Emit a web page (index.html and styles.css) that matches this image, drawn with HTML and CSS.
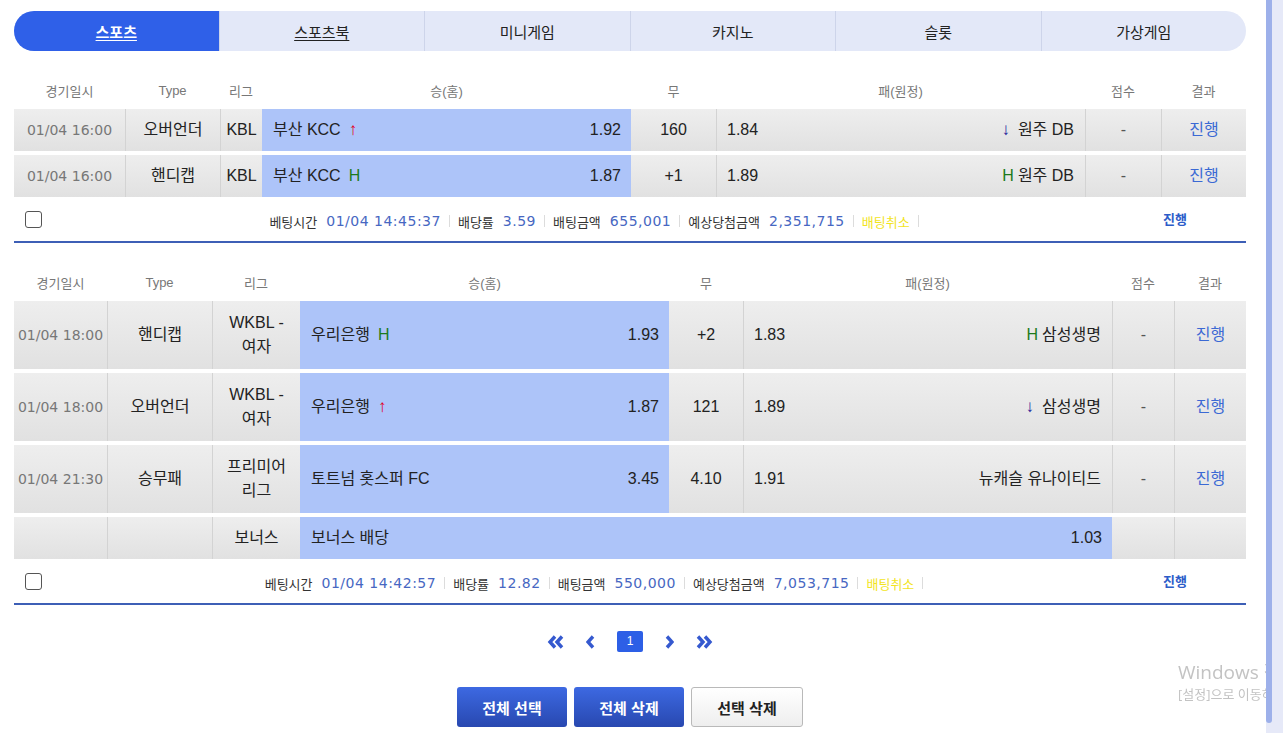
FILE: index.html
```html
<!DOCTYPE html>
<html lang="ko">
<head>
    <meta charset="UTF-8">
    <meta name="viewport" content="width=device-width, initial-scale=1.0">
    <title>베팅내역</title>
    <link rel="stylesheet" href="styles.css">
</head>
<body>
<div class="page">
    <ul class="tabs">
        <li class="tab active"><a href="#">스포츠</a></li>
        <li class="tab linked"><a href="#">스포츠북</a></li>
        <li class="tab"><a href="#">미니게임</a></li>
        <li class="tab"><a href="#">카지노</a></li>
        <li class="tab"><a href="#">슬롯</a></li>
        <li class="tab"><a href="#">가상게임</a></li>
    </ul>

    <!-- 베팅 1 -->
    <section class="bet">
        <table class="slip slip-a">
            <colgroup>
                <col><col><col><col><col><col><col><col>
            </colgroup>
            <thead>
            <tr>
                <th>경기일시</th><th>Type</th><th>리그</th><th>승(홈)</th><th>무</th><th>패(원정)</th><th>점수</th><th>결과</th>
            </tr>
            </thead>
            <tbody>
            <tr>
                <td class="date">01/04 16:00</td>
                <td>오버언더</td>
                <td>KBL</td>
                <td class="home"><div class="pick"><span>부산 KCC<i class="up">↑</i></span><span>1.92</span></div></td>
                <td class="draw">160</td>
                <td class="away"><div class="pick"><span>1.84</span><span><i class="down">↓</i>원주 DB</span></div></td>
                <td class="score">-</td>
                <td class="state">진행</td>
            </tr>
            <tr>
                <td class="date">01/04 16:00</td>
                <td>핸디캡</td>
                <td>KBL</td>
                <td class="home"><div class="pick"><span>부산 KCC<i class="hc">H</i></span><span>1.87</span></div></td>
                <td class="draw">+1</td>
                <td class="away"><div class="pick"><span>1.89</span><span><i class="hc hc-away">H</i>원주 DB</span></div></td>
                <td class="score">-</td>
                <td class="state">진행</td>
            </tr>
            </tbody>
        </table>
        <div class="foot">
            <div class="foot-check"><input type="checkbox"></div>
            <div class="foot-info">
                <span class="lbl">베팅시간</span><span class="val">01/04 14:45:37</span><i class="sep"></i>
                <span class="lbl">배당률</span><span class="val">3.59</span><i class="sep"></i>
                <span class="lbl">배팅금액</span><span class="val">655,001</span><i class="sep"></i>
                <span class="lbl">예상당첨금액</span><span class="val">2,351,715</span><i class="sep"></i>
                <span class="cancel">배팅취소</span><i class="sep"></i>
            </div>
            <div class="foot-state">진행</div>
        </div>
    </section>

    <!-- 베팅 2 -->
    <section class="bet">
        <table class="slip slip-b">
            <colgroup>
                <col><col><col><col><col><col><col><col>
            </colgroup>
            <thead>
            <tr>
                <th>경기일시</th><th>Type</th><th>리그</th><th>승(홈)</th><th>무</th><th>패(원정)</th><th>점수</th><th>결과</th>
            </tr>
            </thead>
            <tbody>
            <tr class="tall">
                <td class="date">01/04 18:00</td>
                <td>핸디캡</td>
                <td>WKBL - 여자</td>
                <td class="home"><div class="pick"><span>우리은행<i class="hc">H</i></span><span>1.93</span></div></td>
                <td class="draw">+2</td>
                <td class="away"><div class="pick"><span>1.83</span><span><i class="hc hc-away">H</i>삼성생명</span></div></td>
                <td class="score">-</td>
                <td class="state">진행</td>
            </tr>
            <tr class="tall">
                <td class="date">01/04 18:00</td>
                <td>오버언더</td>
                <td>WKBL - 여자</td>
                <td class="home"><div class="pick"><span>우리은행<i class="up">↑</i></span><span>1.87</span></div></td>
                <td class="draw">121</td>
                <td class="away"><div class="pick"><span>1.89</span><span><i class="down">↓</i>삼성생명</span></div></td>
                <td class="score">-</td>
                <td class="state">진행</td>
            </tr>
            <tr class="tall">
                <td class="date">01/04 21:30</td>
                <td>승무패</td>
                <td>프리미어 리그</td>
                <td class="home"><div class="pick"><span>토트넘 홋스퍼 FC</span><span>3.45</span></div></td>
                <td class="draw">4.10</td>
                <td class="away"><div class="pick"><span>1.91</span><span>뉴캐슬 유나이티드</span></div></td>
                <td class="score">-</td>
                <td class="state">진행</td>
            </tr>
            <tr>
                <td class="date"></td>
                <td></td>
                <td>보너스</td>
                <td class="home" colspan="3"><div class="pick"><span>보너스 배당</span><span>1.03</span></div></td>
                <td class="after-home"></td>
                <td></td>
            </tr>
            </tbody>
        </table>
        <div class="foot">
            <div class="foot-check"><input type="checkbox"></div>
            <div class="foot-info">
                <span class="lbl">베팅시간</span><span class="val">01/04 14:42:57</span><i class="sep"></i>
                <span class="lbl">배당률</span><span class="val">12.82</span><i class="sep"></i>
                <span class="lbl">배팅금액</span><span class="val">550,000</span><i class="sep"></i>
                <span class="lbl">예상당첨금액</span><span class="val">7,053,715</span><i class="sep"></i>
                <span class="cancel">배팅취소</span><i class="sep"></i>
            </div>
            <div class="foot-state">진행</div>
        </div>
    </section>

    <div class="pager">
        <a href="#" class="pg-arrow">
            <svg width="18" height="14" viewBox="0 0 18 14"><path d="M8 1.5L3 7l5 5.5M15 1.5L10 7l5 5.5" fill="none" stroke="#3559cf" stroke-width="3.4"/></svg>
        </a>
        <a href="#" class="pg-arrow">
            <svg width="10" height="14" viewBox="0 0 10 14"><path d="M7 1.5L2 7l5 5.5" fill="none" stroke="#3559cf" stroke-width="3.4"/></svg>
        </a>
        <a href="#" class="pg-num">1</a>
        <a href="#" class="pg-arrow">
            <svg width="10" height="14" viewBox="0 0 10 14"><path d="M3 1.5L8 7l-5 5.5" fill="none" stroke="#3559cf" stroke-width="3.4"/></svg>
        </a>
        <a href="#" class="pg-arrow">
            <svg width="18" height="14" viewBox="0 0 18 14"><path d="M3 1.5L8 7l-5 5.5M10 1.5L15 7l-5 5.5" fill="none" stroke="#3559cf" stroke-width="3.4"/></svg>
        </a>
    </div>

    <div class="actions">
        <button class="btn btn-blue">전체 선택</button>
        <button class="btn btn-blue">전체 삭제</button>
        <button class="btn btn-white">선택 삭제</button>
    </div>
</div>

<div class="os-mark">
    <div class="os-title">Windows 정품 인증</div>
    <div class="os-sub">[설정]으로 이동하여 Windows를 정품 인증합니다.</div>
</div>

<div class="rail"><div class="rail-thumb"></div></div>
</body>
</html>
```

FILE: styles.css
```css
html, body {
    margin: 0;
    height: 100%;
    overflow: hidden;
}

body {
    font-family: 'Liberation Sans', 'Noto Sans CJK KR', sans-serif;
    background-color: #fff;
    color: #222;
    word-break: keep-all;
}

.page {
    padding: 11px 37px 0 14px;
}

/* 상단 탭 */
.tabs {
    display: flex;
    list-style: none;
    margin: 0;
    padding: 0;
    height: 40px;
    border-radius: 20px;
    overflow: hidden;
    background-color: #e3e8f8;
}

.tab {
    flex: 1;
    display: flex;
    align-items: center;
    justify-content: center;
    border-left: 1px solid #cdd4ea;
}

.tab:first-child {
    border-left: none;
}

.tab a {
    color: #222;
    font-size: 15px;
    text-decoration: none;
}

.tab.linked a {
    text-decoration: underline;
    text-underline-offset: 2px;
}

.tab.active {
    background-color: #2f60e8;
}

.tab.active a {
    color: #fff;
    font-weight: bold;
    text-decoration: underline;
    text-underline-offset: 2px;
}

/* 베팅 슬립 */
.bet {
    margin-top: 20px;
}

.slip {
    width: 100%;
    table-layout: fixed;
    border-collapse: separate;
    border-spacing: 0 4px;
}

.slip th {
    height: 30px;
    padding: 0;
    font-size: 13px;
    font-weight: normal;
    color: #777;
}

.slip-a col:nth-child(1) { width: 111px; }
.slip-a col:nth-child(2) { width: 95px; }
.slip-a col:nth-child(3) { width: 42px; }
.slip-a col:nth-child(4) { width: 369px; }
.slip-a col:nth-child(5) { width: 85px; }
.slip-a col:nth-child(6) { width: 369px; }
.slip-a col:nth-child(7) { width: 76px; }
.slip-a col:nth-child(8) { width: 85px; }

.slip-b col:nth-child(1) { width: 93px; }
.slip-b col:nth-child(2) { width: 105px; }
.slip-b col:nth-child(3) { width: 88px; }
.slip-b col:nth-child(4) { width: 369px; }
.slip-b col:nth-child(5) { width: 74px; }
.slip-b col:nth-child(6) { width: 369px; }
.slip-b col:nth-child(7) { width: 62px; }
.slip-b col:nth-child(8) { width: 72px; }

.slip td {
    height: 42px;
    padding: 0 4px;
    text-align: center;
    font-size: 16px;
    line-height: 24px;
    background: linear-gradient(#eeeeee, #e1e1e1);
    border-left: 1px solid #d3d3d3;
}

.slip tr.tall td {
    height: 68px;
}

.slip td.date {
    border-left: none;
    padding: 0;
    font-family: 'DejaVu Sans', sans-serif;
    font-size: 14px;
    color: #777;
    white-space: nowrap;
}

.slip td.home {
    background: #adc4f9;
    border-left: none;
    padding: 0 10px 0 11px;
}

.slip td.draw,
.slip td.after-home {
    border-left: none;
}

.slip td.away {
    padding: 0 11px 0 10px;
}

.pick {
    display: flex;
    justify-content: space-between;
    align-items: center;
}

.pick i {
    font-style: normal;
}

.up {
    color: #e0001a;
    font-size: 17px;
    margin-left: 8px;
}

.down {
    color: #1b1a9a;
    font-size: 17px;
    margin-right: 8px;
}

.hc {
    color: #1c7a1c;
    margin-left: 8px;
}

.hc-away {
    margin-left: 0;
    margin-right: 4px;
}

.slip td.score {
    color: #555;
}

.slip td.state {
    color: #3b69d4;
}

/* 슬립 하단 정보 */
.foot {
    display: flex;
    align-items: center;
    height: 40px;
    border-bottom: 2px solid #3d5fb6;
}

.foot-check {
    width: 78px;
    padding-left: 11px;
    box-sizing: border-box;
    display: flex;
    align-items: center;
}

.foot-check input {
    appearance: none;
    -webkit-appearance: none;
    width: 17px;
    height: 17px;
    margin: -4px 0 0 0;
    border: 1px solid #555;
    border-radius: 3px;
    background-color: #fff;
}

.foot-info {
    flex: 1;
    display: flex;
    justify-content: center;
    align-items: center;
    font-size: 13px;
}

.lbl {
    color: #333;
    margin-right: 9px;
}

.val {
    font-family: 'DejaVu Sans', sans-serif;
    font-size: 14px;
    letter-spacing: 0.5px;
    color: #4767c2;
}

.cancel {
    color: #f2e41c;
}

.sep {
    display: inline-block;
    width: 1px;
    height: 12px;
    margin: 0 8px;
    background-color: #dcdcdc;
}

.foot-state {
    width: 142px;
    text-align: center;
    font-size: 13px;
    font-weight: bold;
    color: #2c5cc9;
    margin-top: -6px;
}

/* 페이지 이동 */
.pager {
    display: flex;
    justify-content: center;
    align-items: center;
    gap: 21px;
    margin-top: 26px;
    height: 21px;
}

.pg-arrow {
    display: flex;
}

.pg-num {
    width: 26px;
    height: 21px;
    line-height: 21px;
    text-align: center;
    border-radius: 2px;
    background-color: #2d5fe6;
    color: #fff;
    font-size: 12px;
    text-decoration: none;
}

.actions {
    display: flex;
    justify-content: center;
    gap: 7px;
    margin-top: 35px;
}

.btn {
    width: 110px;
    height: 40px;
    border-radius: 3px;
    font-family: 'Liberation Sans', 'Noto Sans CJK KR', sans-serif;
    font-size: 15px;
    font-weight: bold;
    cursor: pointer;
}

.btn-blue {
    border: none;
    color: #fff;
    background: linear-gradient(#3d69e2, #2848b0);
}

.btn-white {
    width: 112px;
    border: 1px solid #b9b9b9;
    color: #222;
    background: linear-gradient(#ffffff, #eeeeee);
}

/* 정품 인증 안내 */
.os-mark {
    position: fixed;
    left: 1178px;
    top: 659px;
    white-space: nowrap;
    color: #c3c3c3;
    font-family: 'Open Sans', 'Noto Sans CJK KR', sans-serif;
}

.os-title {
    font-size: 19px;
    line-height: 26px;
}

.os-sub {
    font-size: 13px;
    line-height: 18px;
}

/* 오른쪽 스크롤 영역 */
.rail {
    position: fixed;
    top: 0;
    right: 0;
    width: 17px;
    height: 100%;
    background-color: #e6e9f8;
}

.rail-thumb {
    width: 6px;
    height: 723px;
    background-color: #9db0ea;
    border-radius: 0 0 3px 3px;
}
```
